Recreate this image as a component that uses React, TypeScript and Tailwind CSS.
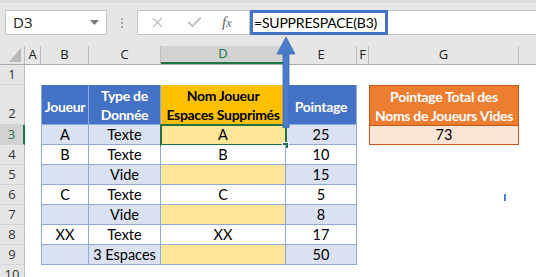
import { X, Check } from "lucide-react";

const COLS = [
  { key: "A", w: "w-[16px]" },
  { key: "B", w: "w-[48px]" },
  { key: "C", w: "w-[72px]" },
  { key: "D", w: "w-[125px]" },
  { key: "E", w: "w-[71px]" },
  { key: "F", w: "w-[12px]" },
  { key: "G", w: "w-[150px]" },
];

const ROWS = [
  { b: "A", c: "Texte", d: "A", e: "25" },
  { b: "B", c: "Texte", d: "B", e: "10" },
  { b: "", c: "Vide", d: "", e: "15" },
  { b: "C", c: "Texte", d: "C", e: "5" },
  { b: "", c: "Vide", d: "", e: "8" },
  { b: "XX", c: "Texte", d: "XX", e: "17" },
  { b: "", c: "3 Espaces", d: "", e: "50" },
];

const cellFont = "font-['Lato','Liberation_Sans',sans-serif] text-[14.5px] text-black whitespace-nowrap";
const headFont = "font-['Lato','Liberation_Sans',sans-serif] text-[14px] font-bold tracking-[-0.3px] whitespace-nowrap leading-[19px]";

const RowHeader = ({ n, active = false, tall = false }: { n: number; active?: boolean; tall?: boolean }) => (
  <div
    className={`w-[25px] shrink-0 flex justify-center border-b border-[#d4d4d4] text-[13px] font-['Open_Sans',sans-serif] ${
      tall ? "items-end pb-[1px]" : "items-center"
    } ${
      active
        ? "bg-[#d2d2d2] text-[#217346] border-r-2 border-r-[#217346]"
        : "bg-[#e6e6e6] text-[#333] border-r border-r-[#bdbdbd]"
    }`}
  >
    {n}
  </div>
);

const Toolbar = () => (
  <div className="h-[46px] bg-[#e6e6e6] border-t-[3px] border-[#dcdcdc] flex items-start pt-[7px]">
    {/* Name box */}
    <div className="ml-[5px] w-[102px] h-[25px] bg-white border border-[#c6c6c6] flex items-center justify-between pl-[7px] pr-[7px]">
      <span className="font-['Open_Sans',sans-serif] text-[15px] text-[#222]">D3</span>
      <svg width="9" height="5" viewBox="0 0 9 5">
        <polygon points="0,0 9,0 4.5,5" fill="#7a7a7a" />
      </svg>
    </div>
    <div className="w-[30px] h-[25px] flex flex-col items-center justify-center gap-[2px]">
      <span className="w-[2px] h-[2px] bg-[#a8a8a8]" />
      <span className="w-[2px] h-[2px] bg-[#a8a8a8]" />
      <span className="w-[2px] h-[2px] bg-[#a8a8a8]" />
    </div>
    {/* Function buttons */}
    <div className="w-[113px] h-[25px] bg-white border border-[#c6c6c6] flex items-center pl-[11px]">
      <X className="w-[17px] h-[17px] text-[#bcbcbc]" strokeWidth={1.5} />
      <Check className="w-[17px] h-[17px] ml-[20px] text-[#bcbcbc]" strokeWidth={2.5} />
      <span className="ml-[19px] font-['Liberation_Serif',serif] italic text-[15px] text-[#666]">
        f<span className="text-[12px]">x</span>
      </span>
    </div>
    {/* Formula input */}
    <div className="flex-1 h-[25px] bg-white border-y border-[#c6c6c6] flex">
      <div className="w-[138px] -my-px h-[25px] border-[3px] border-[#4472c4] flex items-center pl-[1px]">
        <span className="font-['Lato','Liberation_Sans',sans-serif] text-[14px] tracking-[-0.2px] text-black whitespace-nowrap">
          =SUPPRESPACE(B3)
        </span>
      </div>
    </div>
  </div>
);

const ColumnHeaders = () => (
  <div className="flex h-[19px] bg-[#e6e6e6] border-b border-[#ababab]">
    <div className="w-[25px] shrink-0 border-r border-[#bdbdbd] flex items-end justify-end pr-[3px] pb-[2px]">
      <svg width="12" height="14" viewBox="0 0 12 14">
        <polygon points="12,0 12,14 0,14" fill="#b9b9b9" />
      </svg>
    </div>
    {COLS.map((c) => (
      <div
        key={c.key}
        className={`${c.w} shrink-0 flex items-center justify-center border-r border-[#bdbdbd] text-[13px] font-['Open_Sans',sans-serif] ${
          c.key === "D" ? "bg-[#d2d2d2] text-[#217346] border-b-2 border-b-[#217346]" : "text-[#222]"
        }`}
      >
        {c.key}
      </div>
    ))}
    <div className="flex-1" />
  </div>
);

export default function App() {
  return (
    <div className="w-[536px] h-[277px] overflow-hidden bg-white relative">
      <Toolbar />
      <ColumnHeaders />

      {/* Row 1 */}
      <div className="flex h-[20px]">
        <RowHeader n={1} />
      </div>

      {/* Row 2 : table headers */}
      <div className="flex h-[40px]">
        <RowHeader n={2} tall />
        <div className="w-[16px] shrink-0" />
        <div className={`w-[48px] shrink-0 bg-[#4472c4] border-x border-b border-[#8ea9db] flex items-center justify-center pt-[3px] text-white ${headFont}`}>
          Joueur
        </div>
        <div className={`w-[72px] shrink-0 bg-[#4472c4] border-r border-b border-[#8ea9db] flex items-center justify-center text-center text-white ${headFont}`}>
          Type de
          <br />
          Donnée
        </div>
        <div className={`w-[125px] shrink-0 bg-[#ffc000] border-r border-b border-[#8ea9db] flex items-center justify-center text-center text-black ${headFont}`}>
          Nom Joueur
          <br />
          Espaces Supprimés
        </div>
        <div className={`w-[71px] shrink-0 bg-[#4472c4] border-r border-b border-[#8ea9db] flex items-center justify-center pt-[3px] text-white ${headFont}`}>
          Pointage
        </div>
        <div className="w-[12px] shrink-0" />
        <div className={`w-[150px] shrink-0 bg-[#ed7d31] border-x border-t border-[#c65911] flex items-center justify-center text-center text-white ${headFont}`}>
          Pointage Total des
          <br />
          Noms de Joueurs Vides
        </div>
      </div>

      {/* Data rows */}
      {ROWS.map((r, i) => {
        const band = i % 2 === 0;
        const bg = band ? "bg-[#d9e1f2]" : "bg-white";
        const dBg = band ? "bg-[#ffe699]" : "bg-white";
        return (
          <div key={i} className="flex h-[20px]">
            <RowHeader n={i + 3} active={i === 0} />
            <div className="w-[16px] shrink-0" />
            <div className={`w-[48px] shrink-0 ${bg} border-x border-b border-[#8ea9db] flex items-center justify-center ${cellFont}`}>
              {r.b}
            </div>
            <div className={`w-[72px] shrink-0 ${bg} border-r border-b border-[#8ea9db] flex items-center justify-center ${cellFont}`}>
              {r.c}
            </div>
            <div className={`relative w-[125px] shrink-0 ${dBg} border-r border-b border-[#8ea9db] flex items-center justify-center ${cellFont}`}>
              {r.d}
              {i === 0 && (
                <>
                  <div className="absolute -left-px -top-px -right-[2px] -bottom-[2px] border-2 border-[#217346]" />
                  <div className="absolute -right-[4px] -bottom-[5px] w-[7px] h-[7px] bg-[#217346] border border-white" />
                </>
              )}
            </div>
            <div className={`w-[71px] shrink-0 ${bg} border-r border-b border-[#8ea9db] flex items-center justify-center ${cellFont}`}>
              {r.e}
            </div>
            <div className="w-[12px] shrink-0" />
            {i === 0 && (
              <div className={`w-[150px] shrink-0 bg-[#fce4d6] border border-[#c65911] flex items-center justify-center ${cellFont}`}>
                73
              </div>
            )}
          </div>
        );
      })}

      {/* Row 10 */}
      <div className="flex h-[20px]">
        <RowHeader n={10} />
      </div>

      {/* Arrow from formula to D column */}
      <svg className="absolute left-[276px] top-[36px]" width="20" height="92" viewBox="0 0 20 92">
        <rect x="7" y="17" width="6" height="75" fill="#4a7cc9" stroke="#3f6db8" strokeWidth="0.8" />
        <polygon points="10,1 1,18 19,18" fill="#4a7cc9" stroke="#3f6db8" strokeWidth="0.8" />
      </svg>

      {/* Stray cursor mark */}
      <div className="absolute left-[504px] top-[194px] w-[2px] h-[7px] bg-[#4f7fcf]" />
    </div>
  );
}
